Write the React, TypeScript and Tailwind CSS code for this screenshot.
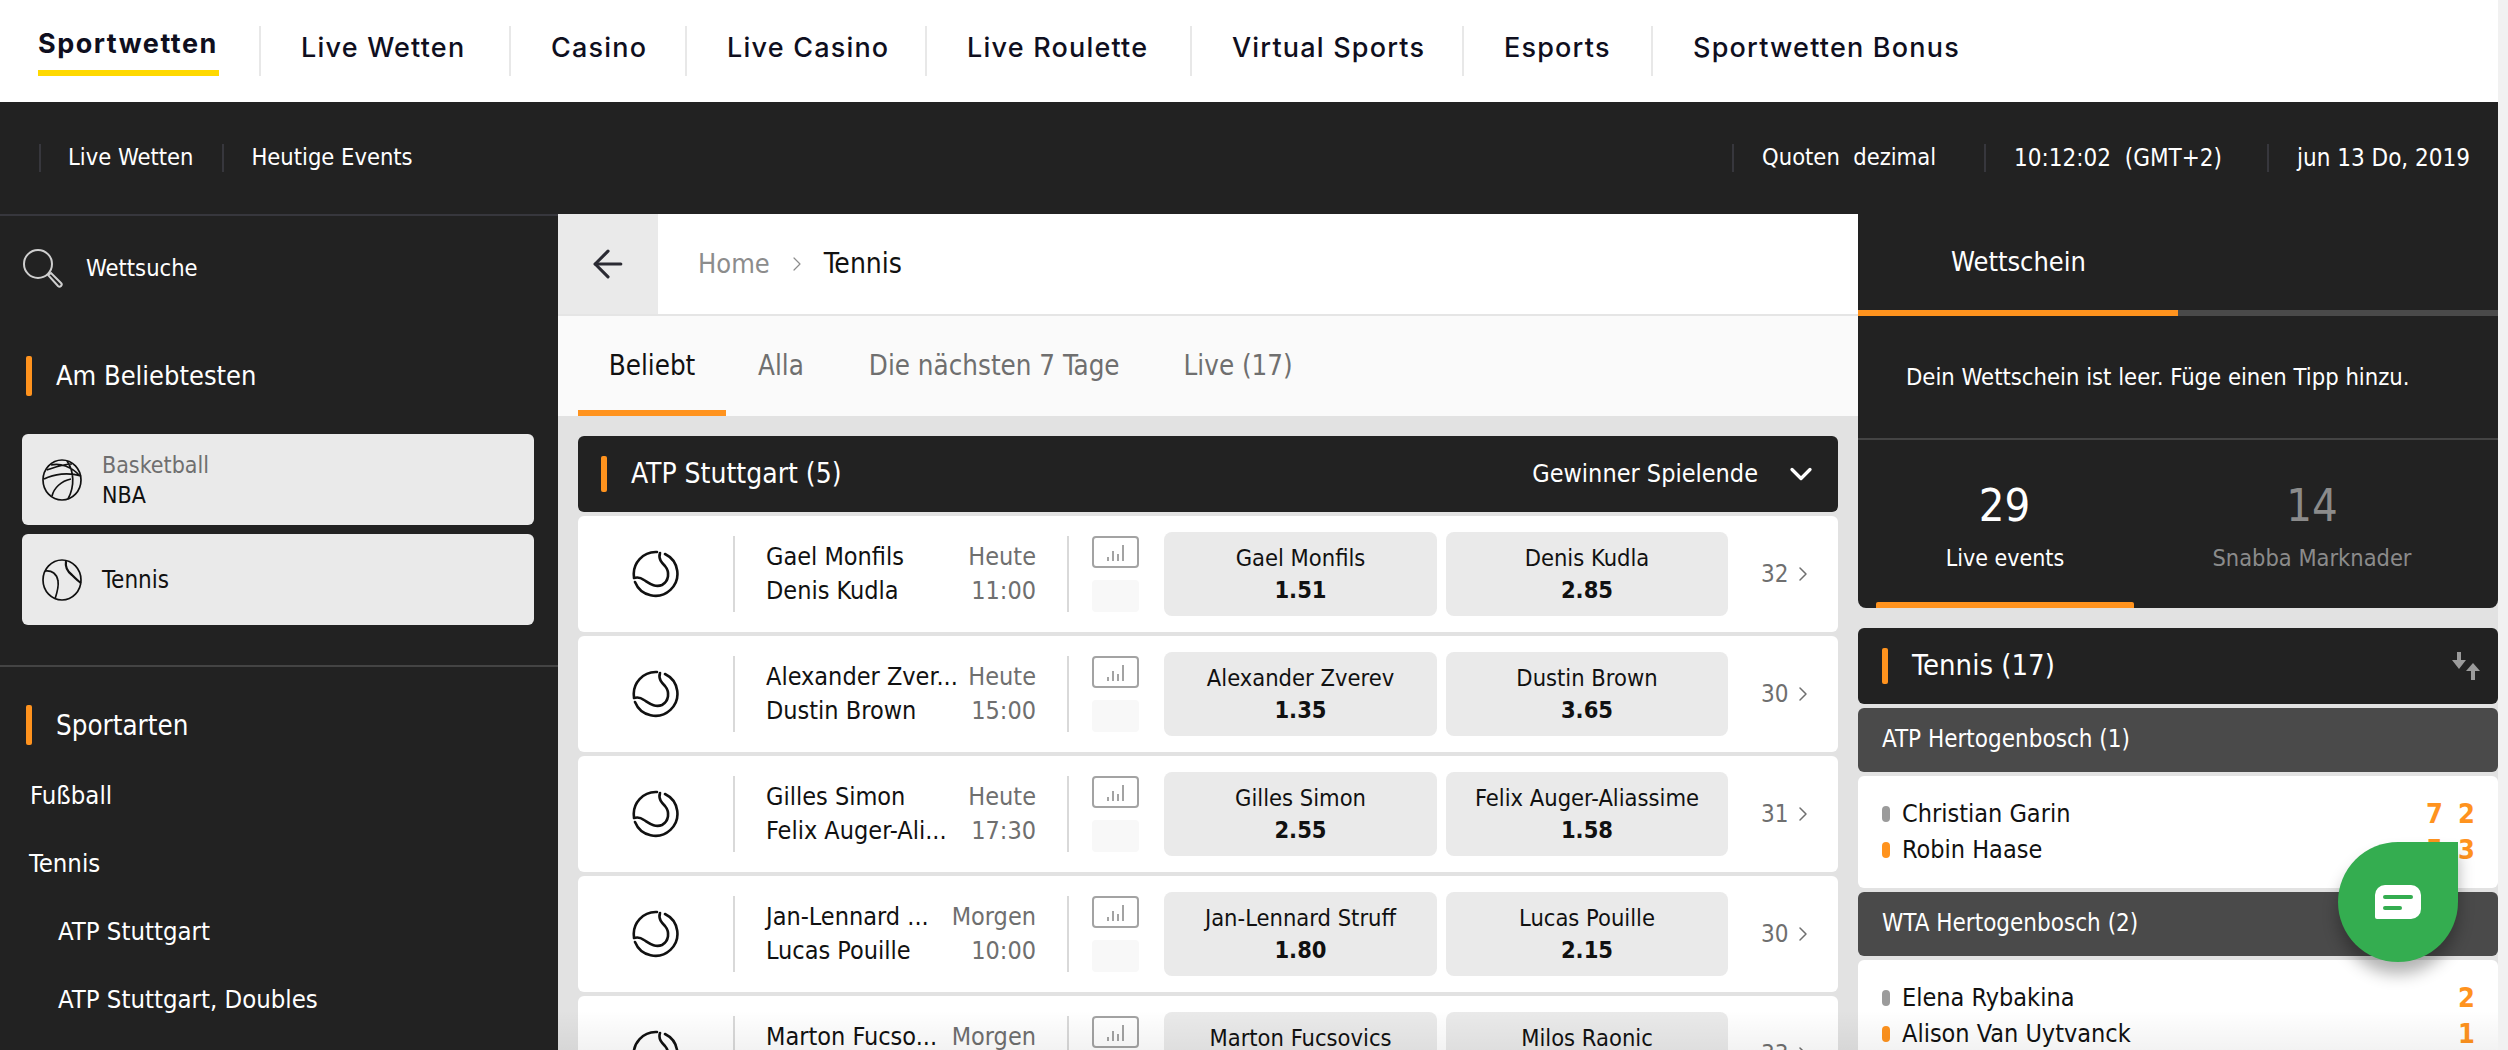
import { ArrowLeft, ChevronDown, ChevronRight } from 'lucide-react';

const font = "font-['DejaVu_Sans_Condensed','DejaVu_Sans',sans-serif]";

const topLinks = [
  { label: 'Live Wetten', cls: 'w-[250px]' },
  { label: 'Casino', cls: 'w-[176px]' },
  { label: 'Live Casino', cls: 'w-[240px]' },
  { label: 'Live Roulette', cls: 'w-[265px]' },
  { label: 'Virtual Sports', cls: 'w-[272px]' },
  { label: 'Esports', cls: 'w-[189px]' },
  { label: 'Sportwetten Bonus', cls: 'w-[320px]' },
];

const matches = [
  { a: 'Gael Monfils', b: 'Denis Kudla', shortA: 'Gael Monfils', shortB: 'Denis Kudla', day: 'Heute', time: '11:00', oddA: '1.51', oddB: '2.85', more: '32' },
  { a: 'Alexander Zverev', b: 'Dustin Brown', shortA: 'Alexander Zver...', shortB: 'Dustin Brown', day: 'Heute', time: '15:00', oddA: '1.35', oddB: '3.65', more: '30' },
  { a: 'Gilles Simon', b: 'Felix Auger-Aliassime', shortA: 'Gilles Simon', shortB: 'Felix Auger-Ali...', day: 'Heute', time: '17:30', oddA: '2.55', oddB: '1.58', more: '31' },
  { a: 'Jan-Lennard Struff', b: 'Lucas Pouille', shortA: 'Jan-Lennard ...', shortB: 'Lucas Pouille', day: 'Morgen', time: '10:00', oddA: '1.80', oddB: '2.15', more: '30' },
  { a: 'Marton Fucsovics', b: 'Milos Raonic', shortA: 'Marton Fucso...', shortB: 'Milos Raonic', day: 'Morgen', time: '11:00', oddA: '1.90', oddB: '1.90', more: '33' },
];

const SearchIcon = () => (
  <svg width="42" height="42" viewBox="0 0 42 42" fill="none" stroke="#cfcfcf" strokeWidth="2">
    <circle cx="16" cy="16" r="14" />
    <path d="M26 27l3-2 10 10a2 2 0 0 1-3 3z" />
  </svg>
);

const BasketballIcon = () => (
  <svg width="40" height="42" viewBox="0 0 40 42" fill="none" stroke="#111" strokeWidth="1.7">
    <ellipse cx="20" cy="21" rx="19" ry="20" />
    <path d="M9 6c9-2 20 1 29 11M2 20c10-5 24-7 37-3M25 2c7 10 8 25 1 38M10 37c2-8 9-15 19-17M5 11c6-2 16-6 25-6" />
  </svg>
);

const TennisIcon = () => (
  <svg width="40" height="42" viewBox="0 0 40 42" fill="none" stroke="#111" strokeWidth="1.7">
    <ellipse cx="20" cy="21" rx="19" ry="20" />
    <path d="M3 12c7-1 12 3 13 10 1 6-1 12-3 18" />
    <path d="M24 2c-1 6 2 11 6 14 3 3 6 6 9 8" strokeWidth="2.2" />
  </svg>
);

const BallIcon = () => (
  <svg width="47" height="48" viewBox="0 0 47 48" fill="none" stroke="#111" strokeWidth="2.6" strokeLinecap="round">
    <path d="M25 2A22 22 0 0 0 2 27" />
    <path d="M28 3C26 9 30 13 33 16C38 22 37 31 30 35C23 38 17 33 12 30C8 27 5 27 2 28" />
    <path d="M3 32A22 22 0 1 0 33 4" />
  </svg>
);

const StatsIcon = () => (
  <div className="flex h-8 w-[47px] items-end justify-center gap-[3px] rounded-[4px] border-2 border-[#a3a3a3] pb-[5px]">
    <span className="h-[4px] w-[2px] bg-[#a3a3a3]" />
    <span className="h-[10px] w-[2px] bg-[#a3a3a3]" />
    <span className="h-[7px] w-[2px] bg-[#a3a3a3]" />
    <span className="h-[16px] w-[2px] bg-[#a3a3a3]" />
  </div>
);

const Accent = ({ h = 'h-10' }: { h?: string }) => <span className={`w-[6px] shrink-0 rounded-[2px] bg-[#ff931e] ${h}`} />;

const MatchRow = ({ m }: { m: (typeof matches)[number] }) => (
  <div className="flex h-[116px] shrink-0 items-center rounded-md bg-white">
    <div className="flex w-[155px] justify-center"><BallIcon /></div>
    <div className="flex h-[76px] w-[336px] items-center border-x-2 border-[#d9d9d9] pl-[31px] pr-[31px] text-[25px]">
      <div className="flex-1 text-[#111] leading-[34px] whitespace-nowrap">
        <div>{m.shortA}</div>
        <div>{m.shortB}</div>
      </div>
      <div className="text-right text-[#6f6f6f] leading-[34px]">
        <div>{m.day}</div>
        <div>{m.time}</div>
      </div>
    </div>
    <div className="ml-[23px] flex h-[76px] w-[47px] flex-col justify-between">
      <StatsIcon />
      <div className="h-8 rounded-[4px] bg-[#f8f8f8]" />
    </div>
    <div className="ml-[25px] flex gap-[9px]">
      {[{ n: m.a, o: m.oddA, w: 'w-[273px]' }, { n: m.b, o: m.oddB, w: 'w-[282px]' }].map((x) => (
        <div key={x.n} className={`flex h-[84px] flex-col items-center justify-center rounded-lg bg-[#eaeaea] text-[23.5px] leading-[32px] text-[#111] ${x.w}`}>
          <span>{x.n}</span>
          <span className="font-bold">{x.o}</span>
        </div>
      ))}
    </div>
    <div className="ml-[33px] flex items-center gap-[3px] text-[24px] text-[#6f6f6f]">
      {m.more}
      <ChevronRight size={24} strokeWidth={1.5} />
    </div>
  </div>
);

const LiveCard = ({ title, rows }: { title: string; rows: { name: string; on: boolean; s: string[] }[] }) => (
  <div className="flex shrink-0 flex-col gap-1">
    <div className="flex h-16 items-center rounded-md bg-[#4a4a4a] pb-[2px] pl-6 text-[24px] text-white">{title}</div>
    <div className="flex h-28 flex-col justify-center gap-[4px] rounded-md bg-white px-6 text-[25px] text-[#111]">
      {rows.map((r) => (
        <div key={r.name} className="flex h-8 items-center">
          <span className={`h-4 w-2 rounded-full ${r.on ? 'bg-[#ff931e]' : 'bg-[#9b9b9b]'}`} />
          <span className="ml-3 flex-1">{r.name}</span>
          <span className="flex gap-4 font-bold text-[#ff931e] text-[27px]">
            {r.s.map((v, i) => <span key={i} className="w-4 text-center">{v}</span>)}
          </span>
        </div>
      ))}
    </div>
  </div>
);

const App = () => {
  return (
    <div className={`relative flex h-[1050px] w-[2508px] overflow-hidden bg-[#f1f1f1] ${font}`}>
      <div className="flex w-[2498px] flex-col">
        <nav className="flex h-[102px] shrink-0 items-center bg-white pl-[38px] font-['Inter',sans-serif] text-[27px] font-medium tracking-[1.2px] text-[#0f0f1e]">
          <div className="mr-[40px] flex h-[50px] w-[181px] flex-col justify-between whitespace-nowrap font-bold tracking-[1.5px]">
            <span className="leading-[36px]">Sportwetten</span>
            <span className="h-[6px] bg-[#ffd900]" />
          </div>
          {topLinks.map((l) => (
            <div key={l.label} className={`flex h-[50px] items-center whitespace-nowrap border-l-2 border-[#e8e8e8] pb-[6px] pl-[40px] ${l.cls}`}>{l.label}</div>
          ))}
        </nav>

        <header className="flex h-[112px] shrink-0 items-center bg-[#222] pl-[39px] pr-[28px] text-[23.5px] text-white">
          <div className="flex h-7 items-center border-l-2 border-[#37373d] pl-[27px] pr-[29px]">Live Wetten</div>
          <div className="flex h-7 items-center border-l-2 border-[#37373d] pl-[27px]">Heutige Events</div>
          <div className="ml-auto flex h-7 items-center border-l-2 border-[#37373d] pl-[28px] pr-[48px] whitespace-pre">Quoten  dezimal</div>
          <div className="flex h-7 items-center border-l-2 border-[#37373d] pl-[28px] pr-[45px] text-[24px] whitespace-pre">10:12:02  (GMT+2)</div>
          <div className="flex h-7 items-center border-l-2 border-[#37373d] pl-[28px] text-[24px]">jun 13 Do, 2019</div>
        </header>

        <div className="flex min-h-0 flex-1">
          <aside className="w-[558px] shrink-0 border-t-2 border-[#37373d] bg-[#222] text-white">
            <div className="flex h-[106px] items-center gap-[22px] pl-[22px] text-[23.5px]"><SearchIcon /><span>Wettsuche</span></div>
            <div className="flex h-[108px] items-center gap-[24px] pl-[26px] text-[27px]"><Accent />Am Beliebtesten</div>
            <div className="flex flex-col gap-[9px] pl-[22px] pr-[24px] pt-[4px]">
              <div className="flex h-[91px] items-center gap-[20px] rounded-md bg-[#eaeaea] pl-5 text-[23px] leading-[30px]">
                <BasketballIcon />
                <div><div className="text-[#6f6f6f]">Basketball</div><div className="text-[#111]">NBA</div></div>
              </div>
              <div className="flex h-[91px] items-center gap-[20px] rounded-md bg-[#eaeaea] pl-5 text-[24px] text-[#111]">
                <TennisIcon />
                Tennis
              </div>
            </div>
            <div className="mt-10 flex h-[96px] items-start gap-[24px] border-t-2 border-[#444] pl-[26px] pt-[38px] text-[27.5px]"><Accent /><span className="leading-[40px]">Sportarten</span></div>
            <div className="flex flex-col text-[25.5px] leading-[68px]">
              <div className="pl-[30px]">Fußball</div>
              <div className="pl-[29px]">Tennis</div>
              <div className="pl-[58px]">ATP Stuttgart</div>
              <div className="pl-[58px]">ATP Stuttgart, Doubles</div>
            </div>
          </aside>

          <main className="relative flex w-[1300px] shrink-0 flex-col bg-[#e2e2e2]">
            <div className="flex h-[102px] shrink-0 border-b-2 border-[#e5e5e5] bg-white text-[27px]">
              <div className="flex w-[100px] items-center justify-center bg-[#eaeaea]"><ArrowLeft size={44} strokeWidth={1.7} color="#2b2b33" /></div>
              <div className="ml-10 flex items-center gap-[15px]">
                <span className="text-[#8c8c8c]">Home</span>
                <ChevronRight size={24} strokeWidth={1.2} color="#8c8c8c" />
                <span className="text-[28px] text-[#111]">Tennis</span>
              </div>
            </div>
            <div className="flex h-[100px] shrink-0 items-stretch bg-[#fafafa] px-5 text-[27.5px] text-[#6f6f6f]">
              <div className="flex w-[148px] items-center justify-center border-b-[6px] border-[#ff931e] pt-[6px] text-[#111]">Beliebt</div>
              <div className="ml-8 flex items-center">Alla</div>
              <div className="ml-[65px] flex items-center">Die nächsten 7 Tage</div>
              <div className="ml-[64px] flex items-center">Live (17)</div>
            </div>
            <div className="flex flex-col gap-1 px-5 pt-5">
              <div className="flex h-[76px] shrink-0 items-center rounded-md bg-[#222] pl-[23px] pr-[19px] text-[28px] text-white">
                <Accent h="h-9" />
                <span className="ml-6">ATP Stuttgart (5)</span>
                <span className="ml-auto text-[25px]">Gewinner Spielende</span>
                <ChevronDown size={36} strokeWidth={2.2} className="ml-[25px]" />
              </div>
              {matches.map((m) => <MatchRow key={m.a} m={m} />)}
            </div>
          </main>

          <section className="flex w-[640px] shrink-0 flex-col gap-5 bg-[#e2e2e2]">
            <div className="flex h-[394px] shrink-0 flex-col rounded-b-lg bg-[#222] text-white">
              <div className="flex h-[96px] items-center pl-[93px] text-[27px]">Wettschein</div>
              <div className="flex h-[6px] bg-[#4a4a4a]"><span className="w-[320px] bg-[#ff931e]" /></div>
              <div className="flex h-[124px] items-center whitespace-nowrap border-b-2 border-[#444] pl-[48px] pt-[2px] text-[23.6px]">Dein Wettschein ist leer. Füge einen Tipp hinzu.</div>
              <div className="flex flex-1">
                <div className="relative w-[294px] pt-[36px] text-center">
                  <div className="ml-[-1px] text-[45px] leading-[60px]">29</div>
                  <div className="mt-[5px] text-[23px]">Live events</div>
                  <span className="absolute bottom-0 left-[18px] h-[6px] w-[258px] rounded-t-[2px] bg-[#ff931e]" />
                </div>
                <div className="flex-1 pt-[36px] pr-[26px] text-center text-[#8b8b8b]">
                  <div className="text-[45px] leading-[60px]">14</div>
                  <div className="mt-[5px] text-[23.4px]">Snabba Marknader</div>
                </div>
              </div>
            </div>
            <div className="flex shrink-0 flex-col gap-1">
              <div className="flex h-[76px] items-center rounded-md bg-[#222] pl-6 pr-[18px] text-[29px] text-white">
                <Accent h="h-9" />
                <span className="ml-6">Tennis (17)</span>
                <svg className="ml-auto" width="28" height="28" viewBox="0 0 28 28" fill="#9b9b9b">
                  <path d="M5 0h4v8h5l-7 9-7-9h5zM19 28h4v-9h5l-7-8-7 8h5z" />
                </svg>
              </div>
              <LiveCard title="ATP Hertogenbosch (1)" rows={[{ name: 'Christian Garin', on: false, s: ['7', '2'] }, { name: 'Robin Haase', on: true, s: ['5', '3'] }]} />
              <LiveCard title="WTA Hertogenbosch (2)" rows={[{ name: 'Elena Rybakina', on: false, s: ['2'] }, { name: 'Alison Van Uytvanck', on: true, s: ['1'] }]} />
            </div>
          </section>
        </div>
      </div>

      <div className="pointer-events-none absolute bottom-0 left-[558px] h-10 w-[1940px] bg-gradient-to-b from-transparent to-black/5" />

      <div className="absolute left-[2338px] top-[842px] flex h-[120px] w-[120px] items-center justify-center rounded-full rounded-tr-[12px] bg-[#34ad50] shadow-[0_12px_16px_rgba(0,0,0,0.3)]">
        <svg width="46" height="34" viewBox="0 0 46 34">
          <path fill="#fff" d="M10 0h26a10 10 0 0 1 10 10v14a10 10 0 0 1-10 10H2a2 2 0 0 1-2-2V10A10 10 0 0 1 10 0z" />
          <rect x="8" y="10" width="30" height="4" rx="2" fill="#34ad50" />
          <rect x="8" y="21" width="19" height="4" rx="2" fill="#34ad50" />
        </svg>
      </div>
    </div>
  );
};

export default App;
